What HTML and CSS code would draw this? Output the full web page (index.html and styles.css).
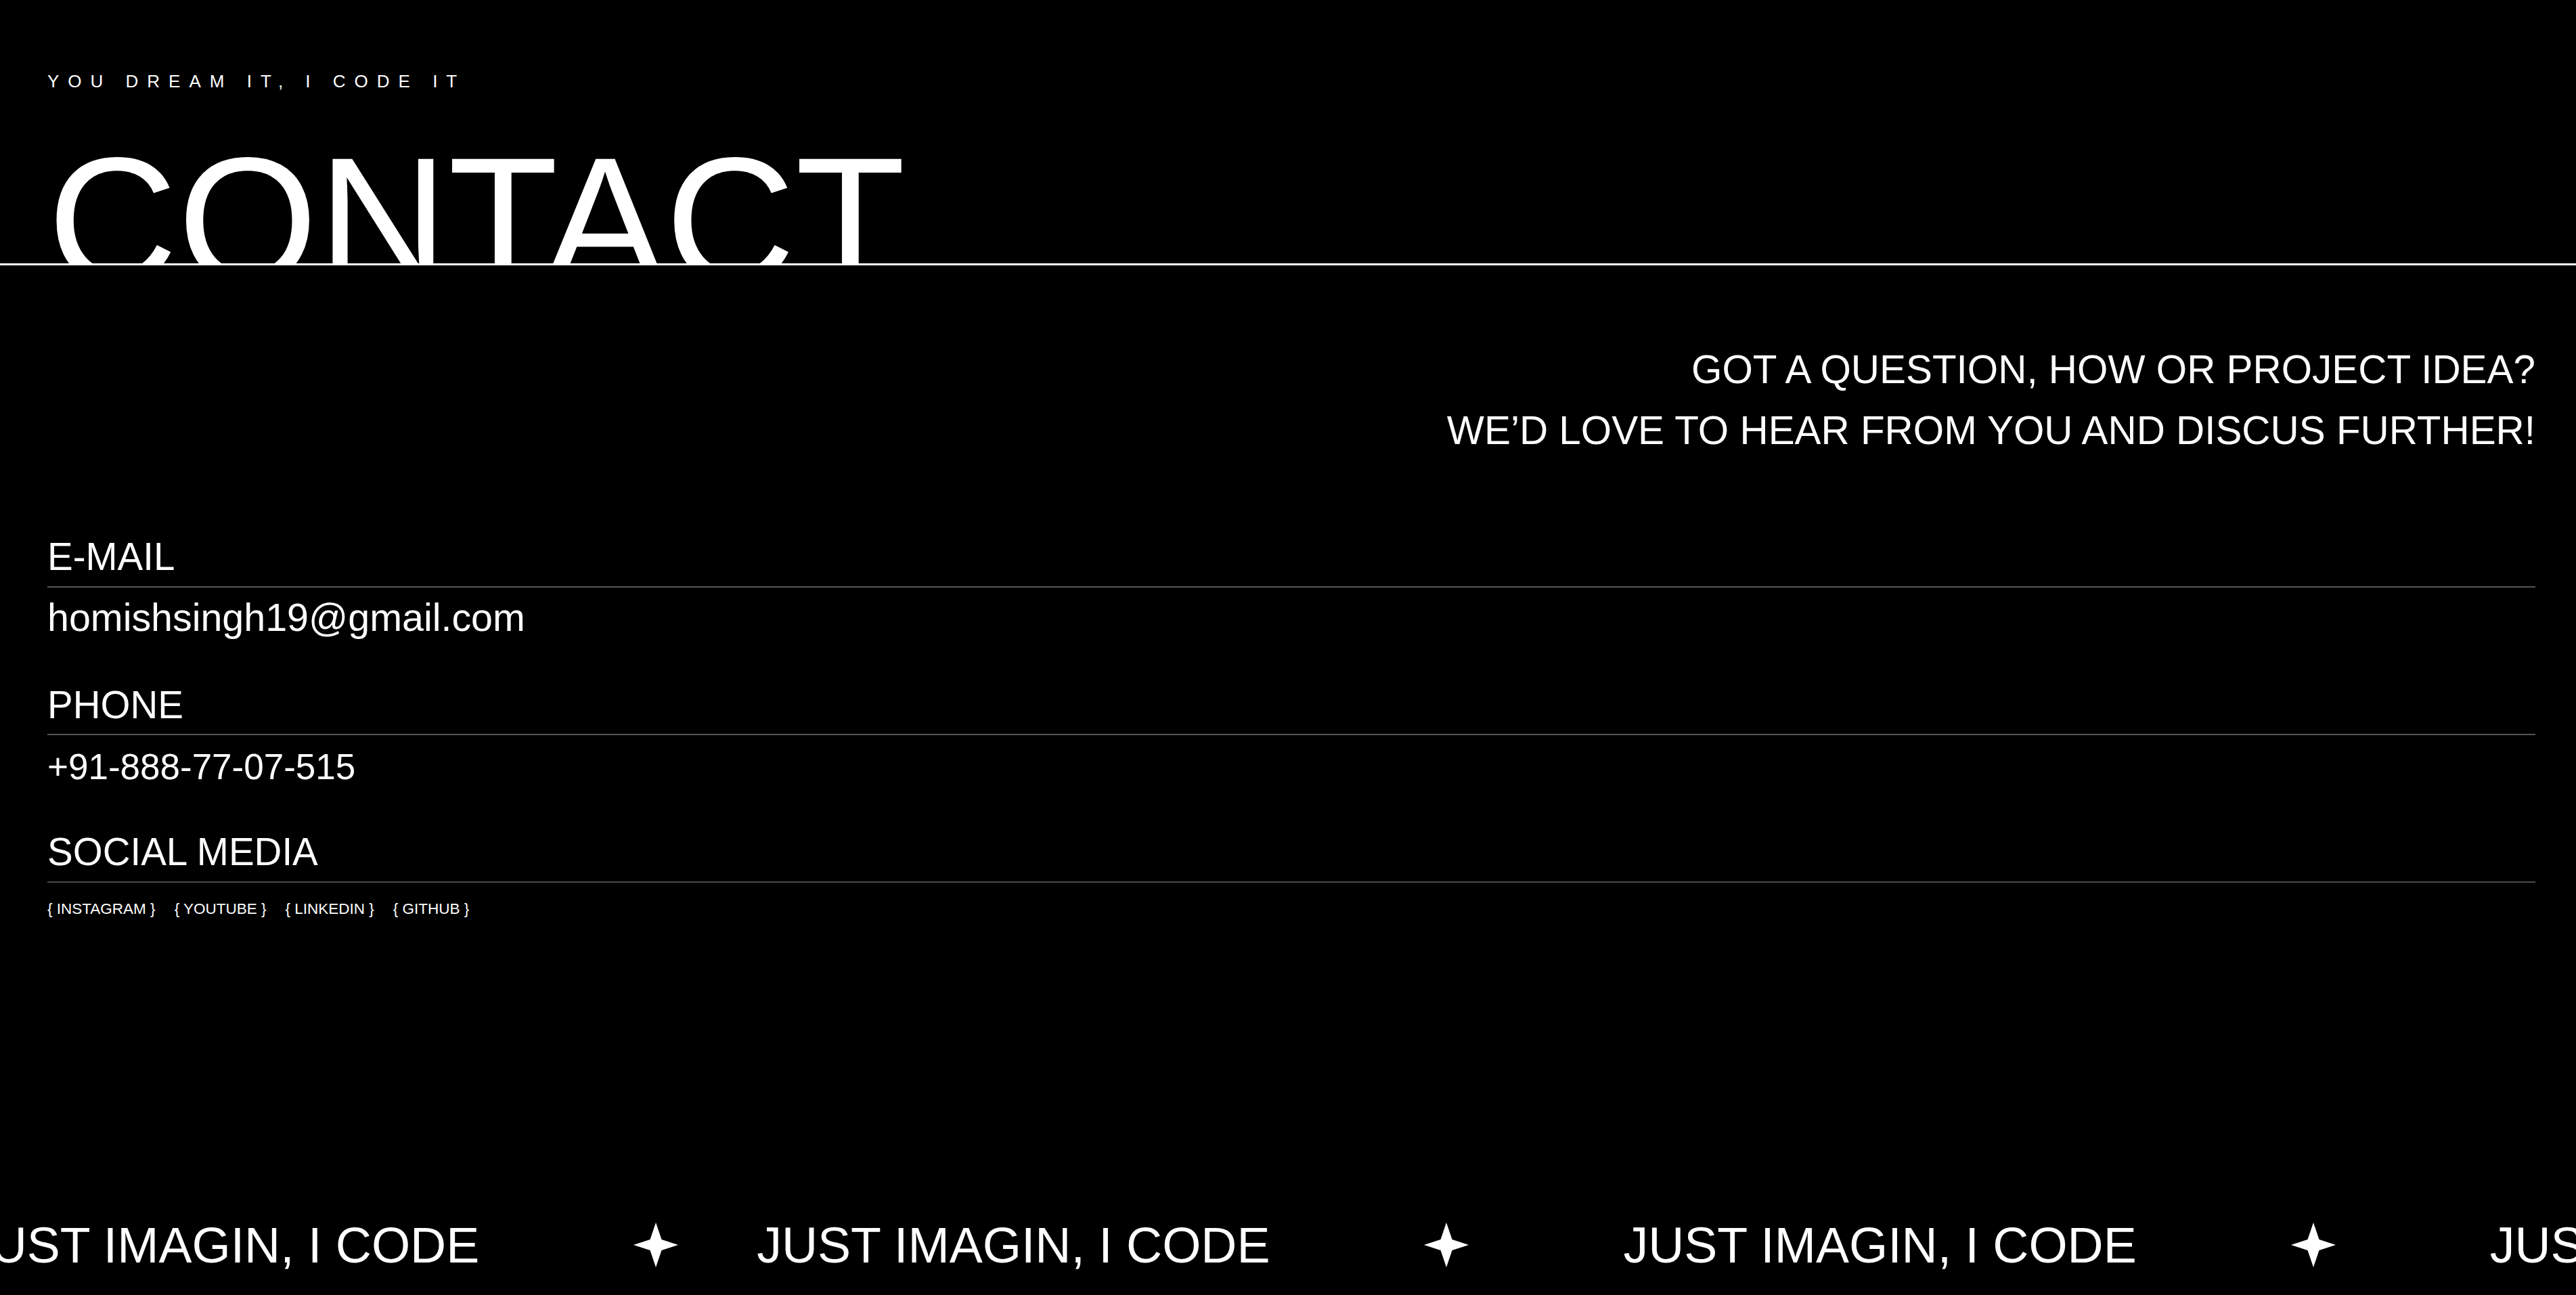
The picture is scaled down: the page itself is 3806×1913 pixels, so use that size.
FILE: index.html
```html
<!DOCTYPE html>
<html lang="en">
<head>
<meta charset="utf-8">
<title>Contact</title>
<link rel="stylesheet" href="styles.css">
</head>
<body>
<div class="page">
  <header class="hero">
    <p class="hero__tagline">YOU DREAM IT, I CODE IT</p>
    <div class="hero__title-wrap">
      <h1 class="hero__title">CONTACT</h1>
    </div>
  </header>

  <main class="content">
    <p class="intro">GOT A QUESTION, HOW OR PROJECT IDEA?<br>WE’D LOVE TO HEAR FROM YOU AND DISCUS FURTHER!</p>

    <section class="info">
      <div class="info__item">
        <h2 class="info__label">E-MAIL</h2>
        <p class="info__value">homishsingh19@gmail.com</p>
      </div>
      <div class="info__item">
        <h2 class="info__label">PHONE</h2>
        <p class="info__value info__value--phone">+91-888-77-07-515</p>
      </div>
      <div class="info__item">
        <h2 class="info__label info__label--thin">SOCIAL MEDIA</h2>
        <nav class="info__links">
          <a class="info__link" href="#">{ INSTAGRAM }</a>
          <a class="info__link" href="#">{ YOUTUBE }</a>
          <a class="info__link" href="#">{ LINKEDIN }</a>
          <a class="info__link" href="#">{ GITHUB }</a>
        </nav>
      </div>
    </section>
  </main>

  <footer class="marquee">
    <div class="marquee__track">
      <div class="marquee__group">
        <span class="marquee__text">JUST IMAGIN, I CODE</span>
        <svg class="marquee__star" viewBox="0 0 66 66" aria-hidden="true"><polygon points="33,0 41.5,25 66,33 41.5,41 33,66 24.5,41 0,33 24.5,25"/></svg>
      </div>
      <div class="marquee__group">
        <span class="marquee__text">JUST IMAGIN, I CODE</span>
        <svg class="marquee__star" viewBox="0 0 66 66" aria-hidden="true"><polygon points="33,0 41.5,25 66,33 41.5,41 33,66 24.5,41 0,33 24.5,25"/></svg>
        <span class="marquee__text">JUST IMAGIN, I CODE</span>
        <svg class="marquee__star" viewBox="0 0 66 66" aria-hidden="true"><polygon points="33,0 41.5,25 66,33 41.5,41 33,66 24.5,41 0,33 24.5,25"/></svg>
        <span class="marquee__text">JUST IMAGIN, I CODE</span>
        <svg class="marquee__star" viewBox="0 0 66 66" aria-hidden="true"><polygon points="33,0 41.5,25 66,33 41.5,41 33,66 24.5,41 0,33 24.5,25"/></svg>
      </div>
    </div>
  </footer>
</div>
</body>
</html>
```

FILE: styles.css
```css
* {
  box-sizing: border-box;
}

html,
body {
  margin: 0;
  background: #000;
}

body {
  color: #fff;
  font-family: "Liberation Sans", Arial, sans-serif;
}

.page {
  min-height: 100vh;
  display: flex;
  flex-direction: column;
}

/* ---------- hero ---------- */
.hero {
  padding-top: 107px;
}

.hero__tagline {
  margin: 0;
  padding: 0 60px 0 70px;
  font-size: 26px;
  line-height: 26px;
  letter-spacing: 13px;
}

.hero__title-wrap {
  margin-top: 60px;
  height: 199px;
  padding: 0 70px;
  overflow: hidden;
  border-bottom: 3px solid #fff;
}

.hero__title {
  margin: 0;
  font-size: 266.4px;
  line-height: 266.4px;
  font-weight: 400;
  white-space: nowrap;
}

/* ---------- content ---------- */
.content {
  padding: 0 60px 0 70px;
}

.intro {
  margin: 109px 0 0;
  text-align: right;
  font-size: 58.4px;
  line-height: 90px;
}

.info {
  margin-top: 114px;
}

.info__item + .info__item {
  margin-top: 72.5px;
}

.info__label {
  margin: 0;
  padding-bottom: 14px;
  font-size: 56.5px;
  line-height: 1;
  font-weight: 400;
  border-bottom: 2px solid #555;
}

.info__label--thin {
  border-bottom-color: #4a4a4a;
}

.info__value {
  margin: 16.5px 0 0;
  font-size: 57.4px;
  line-height: 1;
}

.info__value--phone {
  margin-top: 19.5px;
  font-size: 53px;
}

.info__links {
  margin-top: 28px;
  display: flex;
  gap: 28px;
  font-size: 22.5px;
  line-height: 1;
}

.info__link {
  color: #fff;
  text-decoration: none;
  white-space: nowrap;
}

/* ---------- marquee ---------- */
.marquee {
  margin-top: auto;
  padding-bottom: 37px;
  overflow: hidden;
  font-size: 73.5px;
  line-height: 1;
}

.marquee__track {
  display: flex;
  width: max-content;
  transform: translateX(-50px);
}

.marquee__group {
  display: flex;
  align-items: center;
  gap: 228px;
  padding-right: 116px;
  flex-shrink: 0;
}

.marquee__text {
  white-space: nowrap;
}

.marquee__star {
  display: block;
  width: 66px;
  height: 66px;
  flex-shrink: 0;
  fill: #fff;
}
```
